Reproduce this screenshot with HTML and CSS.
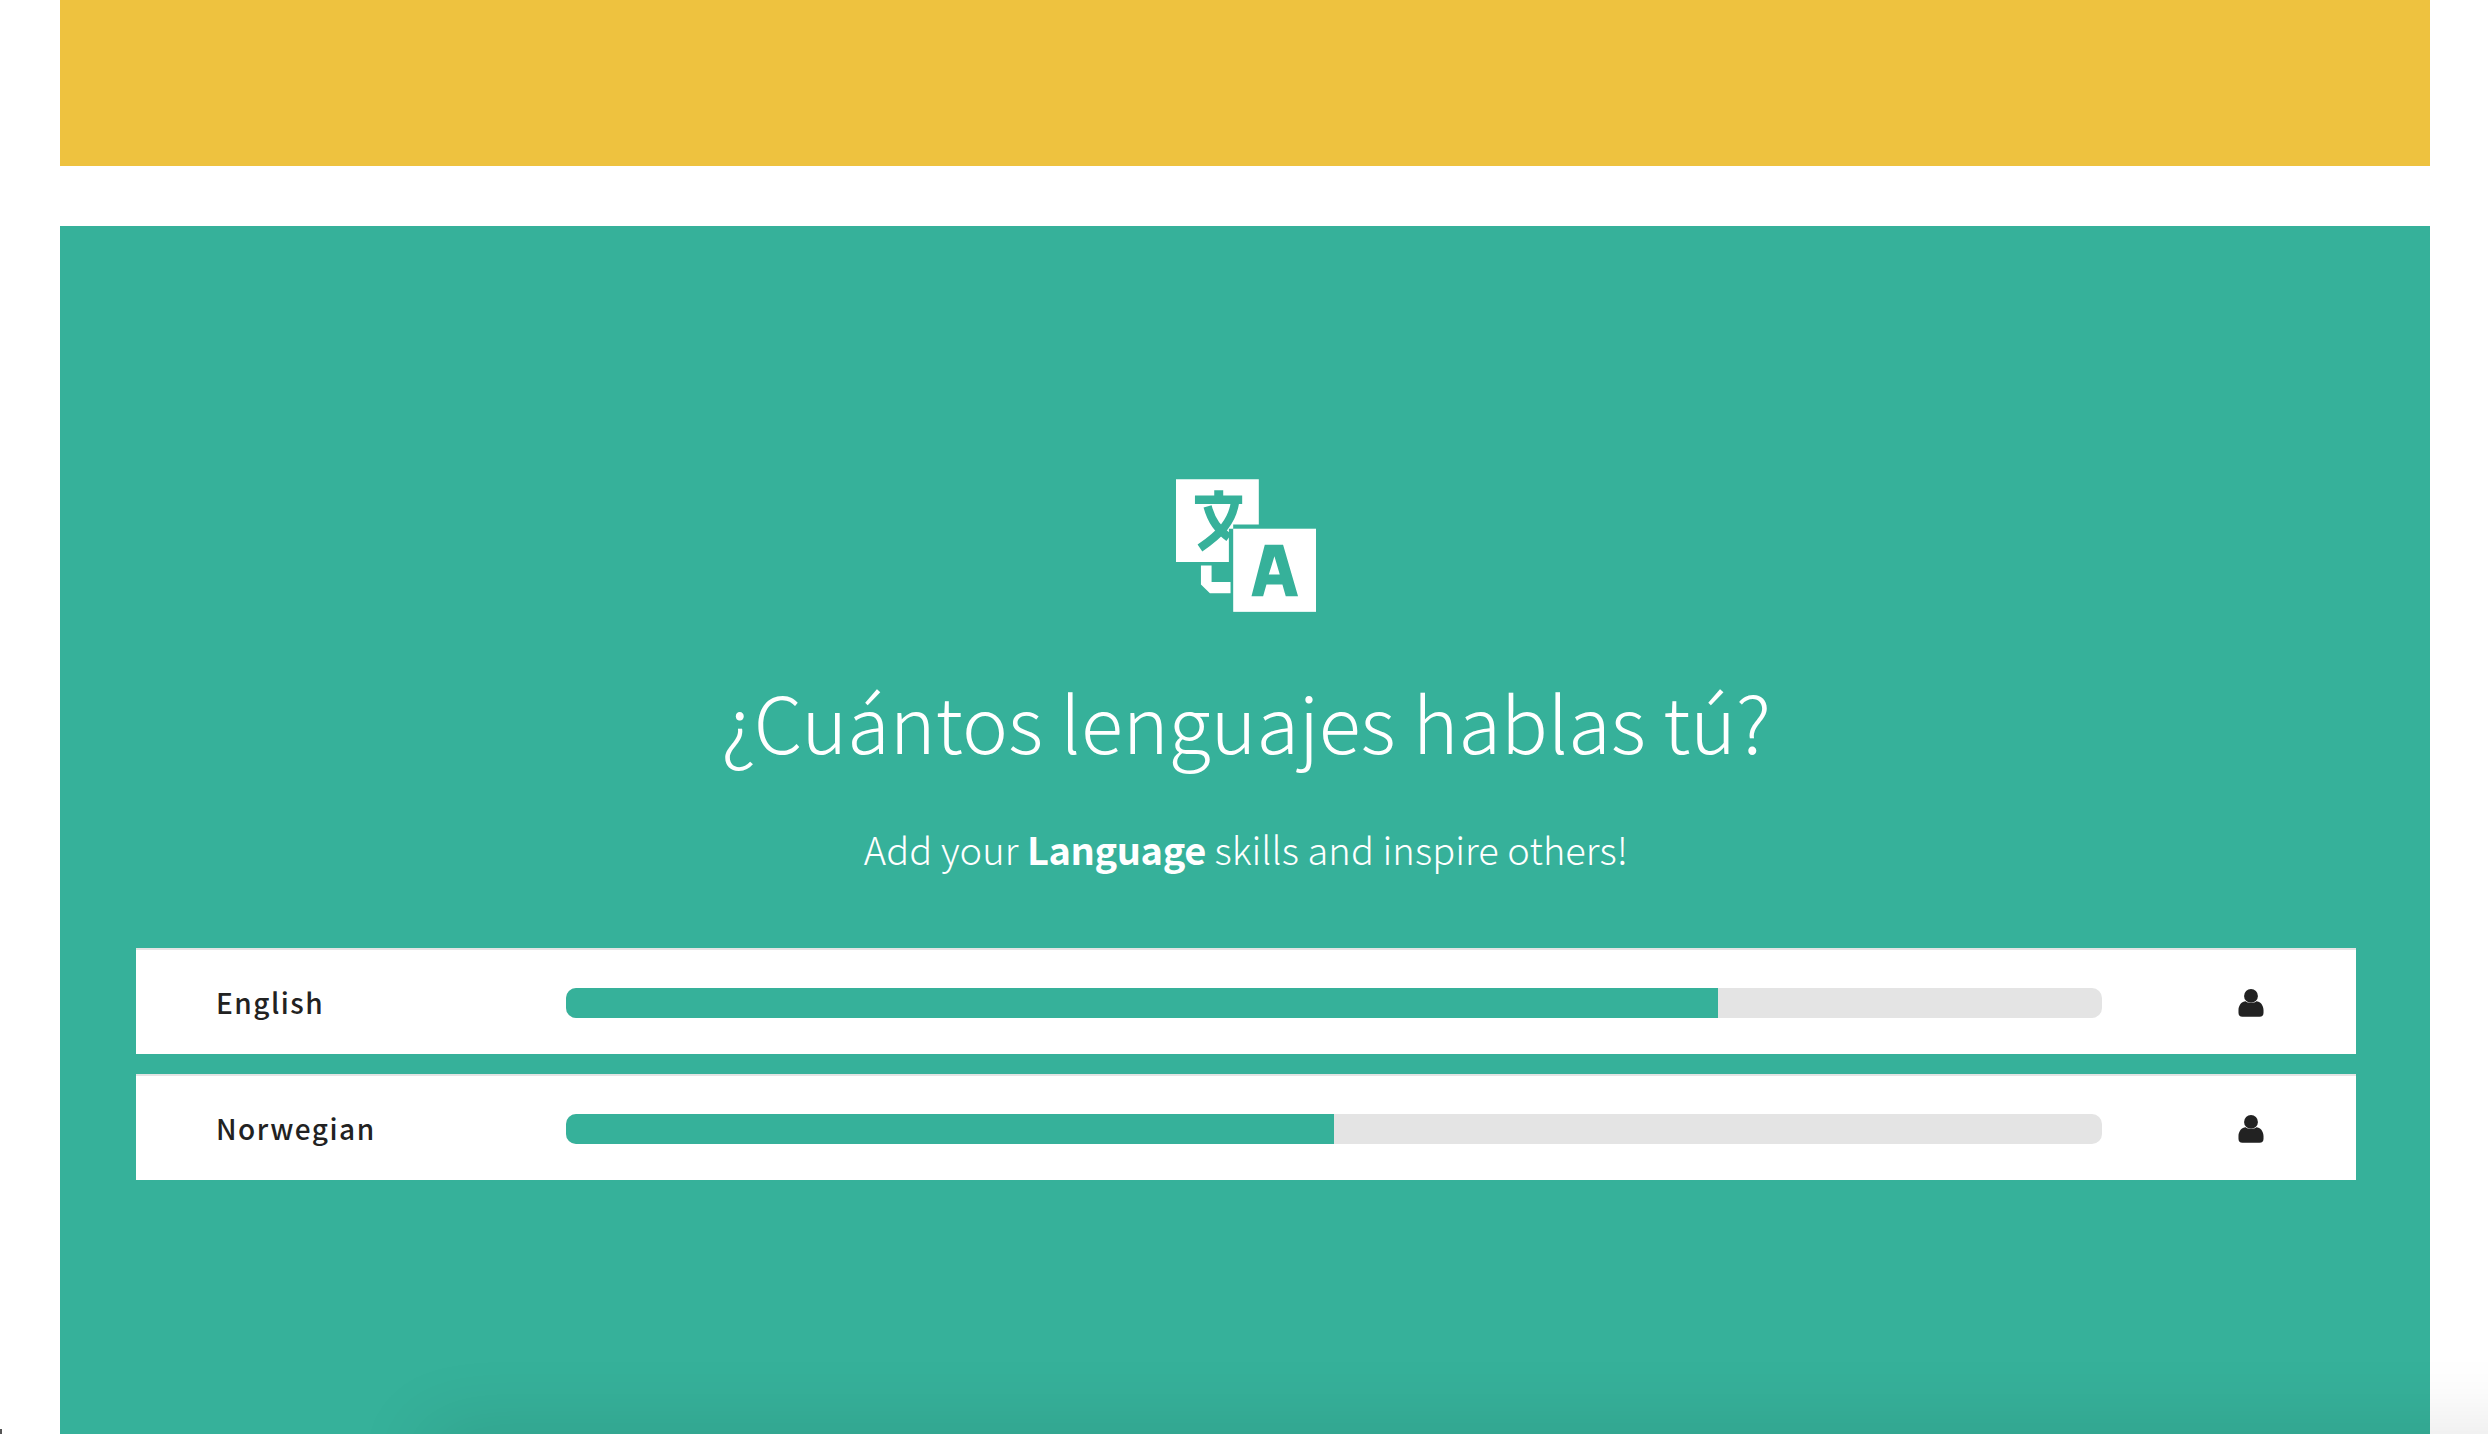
FILE: index.html
```html
<!DOCTYPE html>
<html lang="es">
<head>
    <meta charset="UTF-8">
    <meta name="viewport" content="width=device-width, initial-scale=1.0">
    <title>Languages</title>
    <link rel="stylesheet" href="styles.css">
</head>
<body>
    <div class="top-band"></div>
    <section class="languages">
        <svg class="languages-icon" viewBox="138 88 421 399" aria-hidden="true">
            <path class="icon-white" d="M138 88H387V224H310V237H297V337H138Z"/>
            <path class="icon-teal" d="M195 137H253V121H280V137H337V163H195Z"/>
            <path class="icon-line" d="M233 170C245 215 265 240 297 264M315 160C306 215 275 250 210 295"/>
            <path class="icon-white" d="M213 348H245V397H302V431H240L213 405Z"/>
            <rect class="icon-white" x="310" y="237" width="249" height="250"/>
            <path class="icon-teal" fill-rule="evenodd" d="M365 440L405 285H460L505 440H468L458 405H410L400 440ZM417 375H450L434 320Z"/>
        </svg>
        <h1>¿Cuántos lenguajes hablas tú?</h1>
        <p class="languages-sub">Add your <strong>Language</strong> skills and inspire others!</p>
        <div class="language-row">
            <span class="language-name">English</span>
            <div class="language-bar"><div class="language-fill" style="width: 75%"></div></div>
            <svg class="language-user" viewBox="475 176 78 85" aria-hidden="true">
                <circle cx="514" cy="197" r="21"/>
                <path d="M476 240C476 225 486 213 498 213C503 220 525 220 530 213C542 213 552 225 552 240V248Q552 260 540 260H488Q476 260 476 248Z"/>
            </svg>
        </div>
        <div class="language-row">
            <span class="language-name">Norwegian</span>
            <div class="language-bar"><div class="language-fill" style="width: 50%"></div></div>
            <svg class="language-user" viewBox="475 176 78 85" aria-hidden="true">
                <circle cx="514" cy="197" r="21"/>
                <path d="M476 240C476 225 486 213 498 213C503 220 525 220 530 213C542 213 552 225 552 240V248Q552 260 540 260H488Q476 260 476 248Z"/>
            </svg>
        </div>
    </section>
    <div class="dock-shadow"></div>
    <div class="corner-mark"></div>
</body>
</html>
```

FILE: styles.css
```css
html, body {
    height: 100%;
}
body {
    font-family: "Noto Sans CJK JP", "Noto Sans", sans-serif;
    margin: 0;
    padding: 0 58px 0 60px;
    background-color: #fff;
    overflow: hidden;
    box-sizing: border-box;
    display: flex;
    flex-direction: column;
}
.top-band {
    height: 166px;
    flex-shrink: 0;
    background-color: #eec23f;
    margin-bottom: 60px;
}
.languages {
    flex: 1;
    background-color: #36b19a;
    color: #fff;
    padding: 253px 74px 0 76px;
    display: flex;
    flex-direction: column;
    align-items: center;
}
.languages-icon {
    width: 140px;
    height: 133px;
    flex-shrink: 0;
}
.icon-white {
    fill: #fff;
}
.icon-teal {
    fill: #36b19a;
}
.icon-line {
    fill: none;
    stroke: #36b19a;
    stroke-width: 25;
}
h1 {
    font-size: 77.6px;
    font-weight: 300;
    line-height: 100px;
    margin: 58px 0 0;
}
.languages-sub {
    font-size: 38px;
    font-weight: 300;
    letter-spacing: 0.08px;
    line-height: 50px;
    margin: 54px 0 74px;
}
.languages-sub strong {
    font-weight: 700;
    letter-spacing: -0.4px;
}
.language-row {
    width: 100%;
    box-sizing: border-box;
    height: 106px;
    background-color: #fff;
    border-top: 2px solid #e4e4e4;
    display: grid;
    grid-template-columns: 430px 1fr 254px;
    align-items: center;
    margin-bottom: 20px;
    color: #222;
}
.language-name {
    font-size: 28px;
    font-weight: 500;
    letter-spacing: 1.5px;
    padding-left: 80px;
}
.language-bar {
    height: 30px;
    border-radius: 10px;
    background-color: #e4e4e4;
    overflow: hidden;
    margin-top: 2px;
}
.language-fill {
    height: 100%;
    background-color: #36b19a;
}
.language-user {
    width: 26px;
    height: 28px;
    fill: #222;
    margin: 2px 0 0 136px;
}
.dock-shadow {
    position: fixed;
    left: 430px;
    right: -100px;
    top: 1434px;
    height: 60px;
    box-shadow: 0 0 80px rgba(0, 0, 0, 0.13);
}
.corner-mark {
    position: fixed;
    left: 0;
    bottom: 0;
    width: 2px;
    height: 5px;
    background-color: #555;
}
```
